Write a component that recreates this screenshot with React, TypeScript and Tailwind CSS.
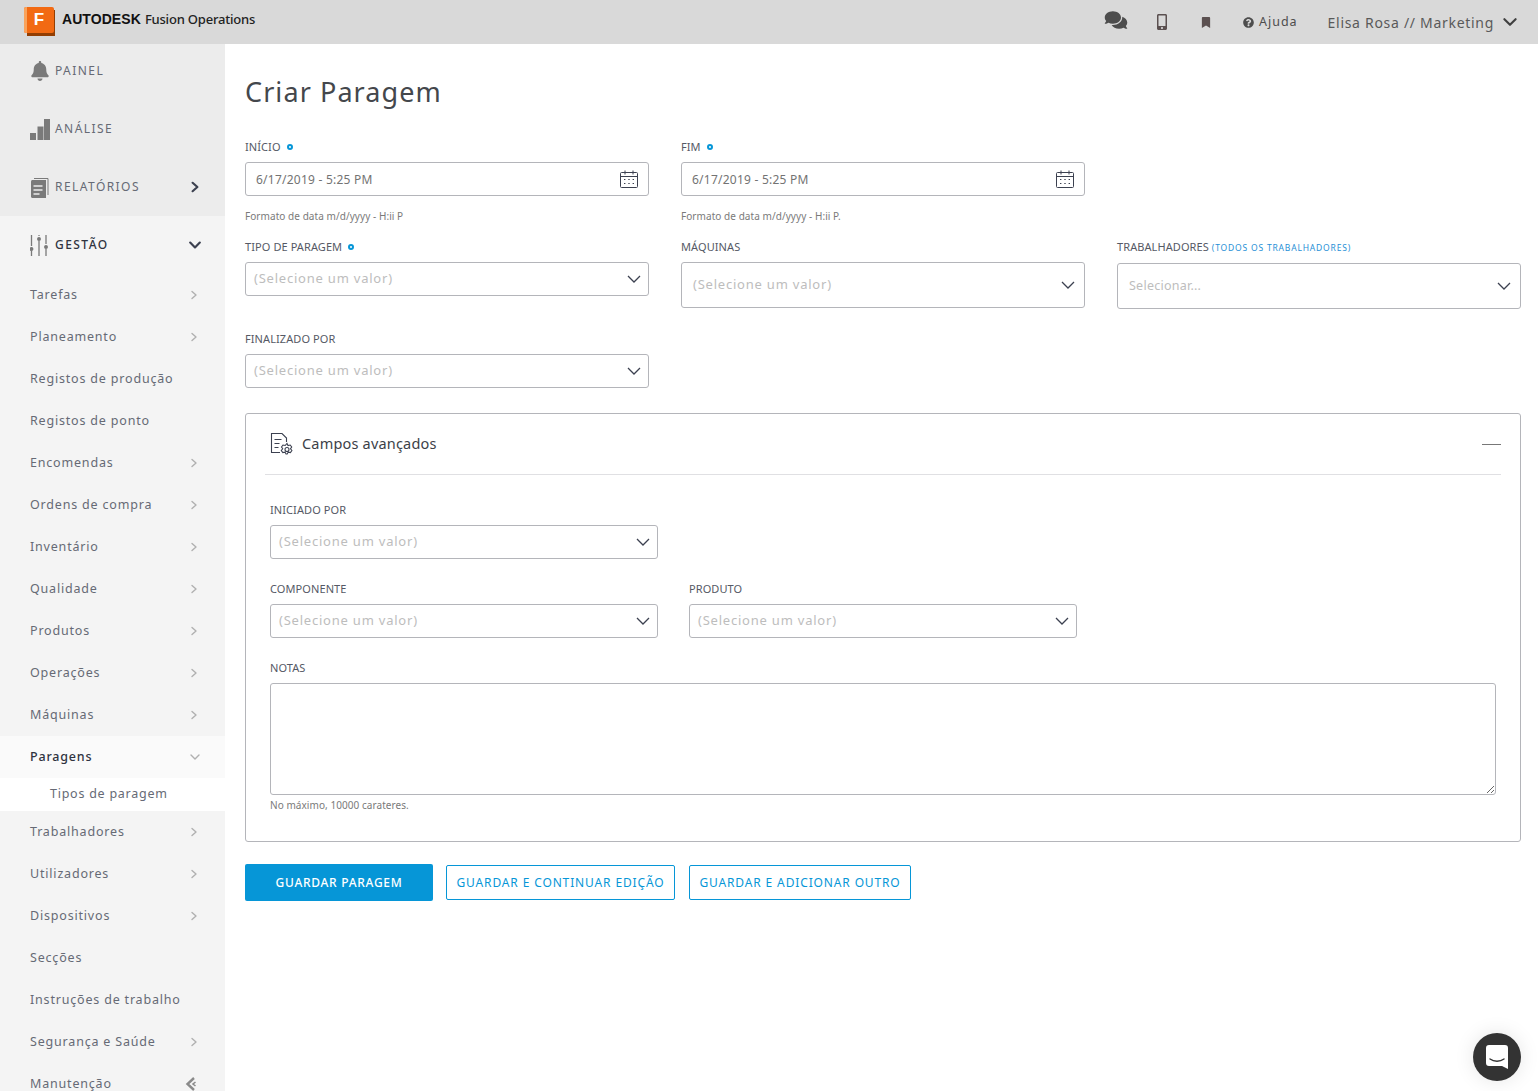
import React from "react";
import { FaBell, FaComments, FaMobileAlt, FaBookmark, FaQuestionCircle } from "react-icons/fa";

const Chev = ({ dir = "right", cls = "" }: { dir?: "right" | "down"; cls?: string }) => (
  <svg viewBox="0 0 10 10" className={cls} fill="none" stroke="currentColor" strokeLinecap="round" strokeLinejoin="round">
    {dir === "right" ? <path d="M3 1.5 7 5 3 8.5" /> : <path d="M1 3 5 7 9 3" />}
  </svg>
);

const Down = () => (
  <svg viewBox="0 0 14 8" className="w-[14px] h-[8px] text-[#3c4150]" fill="none" stroke="currentColor" strokeWidth="1.3">
    <path d="M1 1l6 6 6-6" />
  </svg>
);

const Cal = () => (
  <svg viewBox="0 0 20 20" className="w-[20px] h-[20px] text-[#3c4150]" fill="none" stroke="currentColor" strokeWidth="1">
    <rect x="1.5" y="3.5" width="17" height="15" rx="1" />
    <path d="M1.5 7.5h17M6 1.5v4M14 1.5v4" />
    <path d="M5 10.5h1.4M9.3 10.5h1.4M13.6 10.5h1.4M5 14.5h1.4M9.3 14.5h1.4M13.6 14.5h1.4" />
  </svg>
);

const Dot = () => <span className="inline-block w-[6px] h-[6px] rounded-full border-[2px] border-[#0696d7] ml-[6px] align-[1px]" />;

const Label = ({ children, cls = "" }: { children: React.ReactNode; cls?: string }) => (
  <div className={`text-[11px] leading-[14px] tracking-[0.008em] text-[#555965] whitespace-nowrap ${cls}`}>{children}</div>
);

const Select = ({ h = "h-[34px]", text = "(Selecione um valor)", cls = "text-[13px] tracking-[0.06em]", pad = "pl-[8px] pr-[7px]" }: { h?: string; text?: string; cls?: string; pad?: string }) => (
  <div className={`${h} ${pad} bg-white border border-[#b4b5ba] rounded-[3px] flex items-center justify-between`}>
    <span className={`text-[#bdbdbd] ${cls}`}>{text}</span>
    <Down />
  </div>
);

const DateInput = () => (
  <div className="h-[34px] pl-[10px] pr-[9px] bg-white border border-[#b4b5ba] rounded-[3px] flex items-center justify-between">
    <span className="text-[12px] tracking-[0.02em] text-[#737373] pt-[2px]">6/17/2019 - 5:25 PM</span>
    <Cal />
  </div>
);

const Hint = ({ children }: { children: React.ReactNode }) => (
  <div className="text-[10px] leading-[12px] text-[#7a7a7a] tracking-[0.006em]">{children}</div>
);

const Top = ({ icon, label, chev, active }: { icon: React.ReactNode; label: string; chev?: "right" | "down"; active?: boolean }) => (
  <div className="h-[58px] pl-[30px] pr-[24px] flex items-center">
    <div className="w-[25px] flex justify-start">{icon}</div>
    <span className={`text-[12px] tracking-[0.12em] ${active ? "font-medium text-[#2f3340]" : "text-[#666a75]"}`}>{label}</span>
    {chev && <Chev dir={chev} cls="w-[12px] h-[12px] ml-auto text-[#3c4150] [stroke-width:1.8]" />}
  </div>
);

const Item = ({ label, chev = true }: { label: string; chev?: boolean }) => (
  <div className="h-[42px] pl-[30px] pr-[26px] flex items-center justify-between">
    <span className="text-[12.5px] tracking-[0.065em] text-[#666a75] whitespace-nowrap">{label}</span>
    {chev && <Chev cls="w-[10px] h-[10px] text-[#b0b0b0] [stroke-width:1.4]" />}
  </div>
);

const Sidebar = () => (
  <aside className="w-[225px] shrink-0 bg-[#f4f4f4] overflow-hidden">
    <div className="bg-[#ececec] -mt-[2px]">
      <Top label="PAINEL" icon={<FaBell className="w-[20px] h-[20px] text-[#7a7a7a]" />} />
      <Top label="ANÁLISE" icon={
        <svg viewBox="0 0 20 21" className="w-[20px] h-[21px] text-[#7a7a7a]" fill="currentColor"><rect y="14" width="6" height="7" /><rect x="7.5" y="7.5" width="6" height="13.5" /><rect x="14" y="0" width="6" height="21" /></svg>
      } />
      <Top label="RELATÓRIOS" chev="right" icon={
        <svg viewBox="0 0 19 21" className="w-[19px] h-[21px] text-[#7a7a7a]" fill="currentColor">
          <path d="M2 3h14v18H2a2 2 0 0 1-1-1V5a2 2 0 0 1 1-2z" />
          <path d="M4 1.5h14V18" fill="none" stroke="currentColor" />
          <path d="M3.5 9h9M3.5 13h9M3.5 17h6" stroke="#ececec" strokeWidth="1.4" />
        </svg>
      } />
    </div>
    <Top label="GESTÃO" chev="down" active icon={
      <svg viewBox="0 0 18 21" className="w-[18px] h-[21px] text-[#7a7a7a]" fill="none" stroke="currentColor" strokeWidth="1.3">
        <path d="M1.5 0v11M1.5 16v5M9 0v1M9 6v15M16 0v9M16 14v7" />
        <circle cx="1.5" cy="14" r="1.3" fill="currentColor" /><circle cx="9" cy="4" r="1.3" fill="currentColor" /><circle cx="16" cy="12" r="1.3" fill="currentColor" />
      </svg>
    } />
    {["Tarefas", "Planeamento"].map((l) => <Item key={l} label={l} />)}
    <Item label="Registos de produção" chev={false} />
    <Item label="Registos de ponto" chev={false} />
    {["Encomendas", "Ordens de compra", "Inventário", "Qualidade", "Produtos", "Operações", "Máquinas"].map((l) => <Item key={l} label={l} />)}
    <div className="h-[42px] pl-[30px] pr-[25px] flex items-center justify-between bg-[#fafafa]">
      <span className="text-[12.5px] font-medium tracking-[0.065em] text-[#2f3340]">Paragens</span>
      <Chev dir="down" cls="w-[10px] h-[10px] text-[#b0b0b0] [stroke-width:1.4]" />
    </div>
    <div className="h-[33px] pl-[50px] flex items-center bg-white">
      <span className="text-[12.5px] tracking-[0.06em] text-[#666a75]">Tipos de paragem</span>
    </div>
    {["Trabalhadores", "Utilizadores", "Dispositivos"].map((l) => <Item key={l} label={l} />)}
    <Item label="Secções" chev={false} />
    <Item label="Instruções de trabalho" chev={false} />
    <Item label="Segurança e Saúde" />
    <div className="h-[42px] pl-[30px] pr-[28px] flex items-center justify-between">
      <span className="text-[12.5px] tracking-[0.065em] text-[#666a75]">Manutenção</span>
      <svg viewBox="0 0 12 14" className="w-[12px] h-[14px] text-[#8a8a8a]" fill="none" stroke="currentColor" strokeWidth="2.4"><path d="M9 1 2.5 7 9 13" /><path d="M10.5 5 8 7l2.5 2" strokeWidth="1.6" /></svg>
    </div>
  </aside>
);

const Header = () => (
  <header className="h-[44px] shrink-0 bg-[#d9d9d9] flex items-center pl-[24px] pr-[21px]">
    <div className="relative w-[31px] h-[29px] mt-[-1px] mr-[7px]">
      <div className="absolute left-[3px] top-[3px] w-[28px] h-[26px] bg-[#933e02]" />
      <div className="absolute left-0 top-0 w-[30px] h-[26px] bg-[#f26a13] rounded-[2px] overflow-hidden flex items-center justify-center text-white font-bold text-[17px] [font-family:'Liberation_Sans',sans-serif]">
        <div className="absolute left-0 top-0 bottom-0 w-[3px] bg-[#f9a35c]" />
        F
      </div>
    </div>
    <span className="text-[14px] font-bold tracking-[0.005em] text-[#111] -mt-[5px] mr-[4px] [font-family:'Liberation_Sans',sans-serif]">AUTODESK</span>
    <span className="text-[13px] font-medium text-[#222] -mt-[5px] tracking-[-0.015em]">Fusion Operations</span>
    <div className="ml-auto flex items-center text-[#4d4d4d]">
      <FaComments className="w-[24px] h-[20px] -mt-[4px]" />
      <FaMobileAlt className="w-[14px] h-[16px] ml-[27px] text-[#5b5050]" />
      <FaBookmark className="w-[10px] h-[11px] ml-[32px] text-[#5b5050]" />
      <FaQuestionCircle className="w-[11px] h-[11px] ml-[32px]" />
      <span className="text-[12.5px] tracking-[0.08em] ml-[5px] pt-[1px]">Ajuda</span>
      <span className="text-[14px] tracking-[0.05em] ml-[30px] text-[#595959]">Elisa Rosa // Marketing</span>
      <Chev dir="down" cls="w-[14px] h-[14px] ml-[9px] text-[#3f3f3f] [stroke-width:1.5]" />
    </div>
  </header>
);

export default function App() {
  return (
    <div className="w-[1538px] h-[1091px] overflow-hidden flex flex-col bg-white [font-family:'Noto_Sans',sans-serif] relative">
      <Header />
      <div className="flex flex-1 min-h-0">
        <Sidebar />
        <main className="flex-1 pl-[20px] pr-[17px]">
          <h1 className="text-[27px] leading-[36px] tracking-[0.04em] text-[#44474c] mt-[30px] font-normal">Criar Paragem</h1>

          <div className="grid grid-cols-3 gap-x-[32px] mt-[30px]">
            <div>
              <Label cls="mb-[8px]">INÍCIO<Dot /></Label>
              <DateInput />
              <div className="mt-[14px]"><Hint>Formato de data m/d/yyyy - H:ii P</Hint></div>
            </div>
            <div>
              <Label cls="mb-[8px]">FIM<Dot /></Label>
              <DateInput />
              <div className="mt-[14px]"><Hint>Formato de data m/d/yyyy - H:ii P.</Hint></div>
            </div>
          </div>

          <div className="grid grid-cols-3 gap-x-[32px] mt-[18px] items-start">
            <div>
              <Label cls="mb-[8px]">TIPO DE PARAGEM<Dot /></Label>
              <Select />
            </div>
            <div>
              <Label cls="mb-[8px]">MÁQUINAS</Label>
              <Select h="h-[46px]" pad="pl-[11px] pr-[9px]" />
            </div>
            <div>
              <Label cls="mb-[8px]">TRABALHADORES <span className="text-[8.5px] tracking-[0.096em] text-[#1f8fd6]">(TODOS OS TRABALHADORES)</span></Label>
              <Select h="h-[46px]" text="Selecionar..." cls="text-[12.5px] tracking-[0.02em] pt-[1px]" pad="pl-[11px] pr-[9px]" />
            </div>
          </div>

          <div className="grid grid-cols-3 gap-x-[32px]">
            <div>
              <Label cls="mb-[8px] mt-[23px]">FINALIZADO POR</Label>
              <Select />
            </div>
          </div>

          <section className="mt-[25px] h-[429px] border border-[#b4b5ba] rounded-[3px] px-[19px]">
            <div className="h-[61px] flex items-center justify-between border-b border-[#e0e0e3] pl-[5px]">
              <div className="flex items-center">
                <svg viewBox="0 0 24 24" className="w-[24px] h-[24px] text-[#3c4150]" fill="none" stroke="currentColor" strokeWidth="1.1">
                  <path d="M10 20.5H1.5V1.5h10.5L16.5 6v4" />
                  <path d="M4.5 7.5h7M4.5 11.5h5M4.5 15.5h4" />
                  <circle cx="17" cy="17.5" r="2" />
                  <path d="M17 11.5l1 2 2.2-.5 1.5 2-1.2 1.8 1.4 1.7-1.5 2.1-2.2-.5-1 1.9h-1.2l-1-1.9-2.2.5-1.5-2.1 1.4-1.7-1.2-1.8 1.5-2 2.2.5z" />
                </svg>
                <span className="ml-[8px] text-[14.5px] tracking-[0.013em] text-[#3c3f48]">Campos avançados</span>
              </div>
              <div className="w-[19px] h-[1px] bg-[#777]" />
            </div>
            <div className="px-[5px]">
              <Label cls="mt-[28px] mb-[8px]">INICIADO POR</Label>
              <div className="w-[388px]"><Select /></div>
              <div className="flex gap-[31px] mt-[23px]">
                <div className="w-[388px]"><Label cls="mb-[8px]">COMPONENTE</Label><Select /></div>
                <div className="w-[388px]"><Label cls="mb-[8px]">PRODUTO</Label><Select /></div>
              </div>
              <Label cls="mt-[23px] mb-[8px]">NOTAS</Label>
              <textarea aria-label="Notas" className="block w-full h-[112px] border border-[#b4b5ba] rounded-[3px] bg-white outline-none" />
              <div className="mt-[4px]"><Hint>No máximo, 10000 carateres.</Hint></div>
            </div>
          </section>

          <div className="flex items-center mt-[22px]">
            <button className="w-[188px] h-[37px] pt-[1px] bg-[#0696d7] rounded-[2px] text-white text-[12px] font-medium tracking-[0.06em]">GUARDAR PARAGEM</button>
            <button className="w-[229px] h-[35px] pt-[1px] ml-[13px] bg-white border border-[#0696d7] rounded-[2px] text-[#0696d7] text-[12px] tracking-[0.072em] whitespace-nowrap">GUARDAR E CONTINUAR EDIÇÃO</button>
            <button className="w-[222px] h-[35px] pt-[1px] ml-[14px] bg-white border border-[#0696d7] rounded-[2px] text-[#0696d7] text-[12px] tracking-[0.072em] whitespace-nowrap">GUARDAR E ADICIONAR OUTRO</button>
          </div>
        </main>
      </div>

      <div className="absolute left-[1473px] top-[1033px] w-[48px] h-[48px] rounded-full bg-[#333] flex items-center justify-center shadow-[0_0_20px_rgba(0,0,0,0.1)]">
        <svg viewBox="0 0 22 24" className="w-[22px] h-[24px]">
          <path d="M3 0h16a3 3 0 0 1 3 3v21l-6-3H3a3 3 0 0 1-3-3V3a3 3 0 0 1 3-3z" fill="#fff" />
          <path d="M4 14c4 3 10 3 14 0" fill="none" stroke="#333" strokeWidth="1.4" strokeLinecap="round" />
        </svg>
      </div>
    </div>
  );
}
